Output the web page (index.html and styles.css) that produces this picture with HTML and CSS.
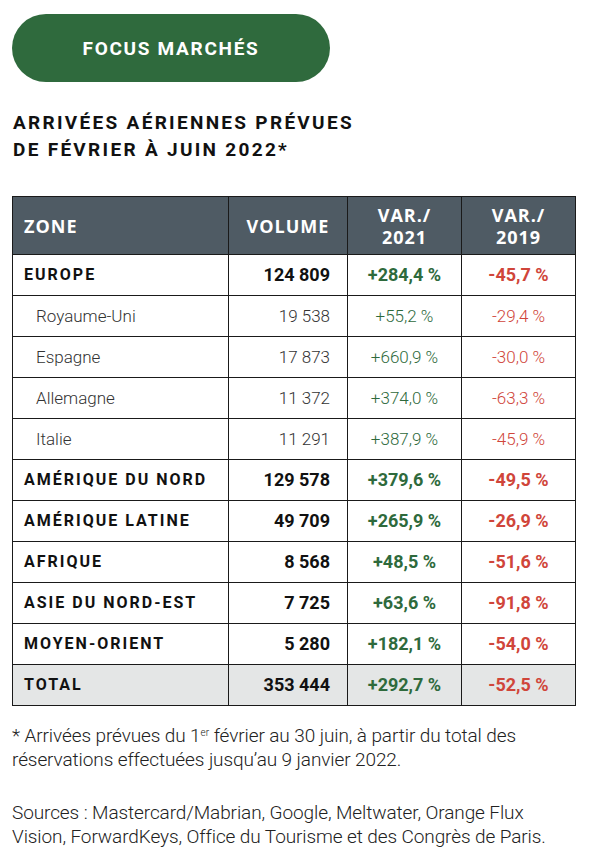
FILE: index.html
```html
<!DOCTYPE html>
<html lang="fr">
<head>
<meta charset="utf-8">
<title>Focus marchés</title>
<link rel="stylesheet" href="styles.css">
</head>
<body>
<div class="page">
  <div class="pill">FOCUS MARCHÉS</div>
  <h1 class="title">ARRIVÉES AÉRIENNES PRÉVUES<br>DE FÉVRIER À JUIN 2022*</h1>
  <table class="data">
    <colgroup>
      <col class="c-zone"><col class="c-vol"><col class="c-var"><col class="c-var">
    </colgroup>
    <thead>
      <tr><th class="zone">ZONE</th><th>VOLUME</th><th>VAR./<br>2021</th><th>VAR./<br>2019</th></tr>
    </thead>
    <tbody>
      <tr class="main"><td class="zone">EUROPE</td><td class="vol">124 809</td><td class="pos">+284,4 %</td><td class="neg">-45,7 %</td></tr>
      <tr class="sub"><td class="zone">Royaume-Uni</td><td class="vol">19 538</td><td class="pos">+55,2 %</td><td class="neg">-29,4 %</td></tr>
      <tr class="sub"><td class="zone">Espagne</td><td class="vol">17 873</td><td class="pos">+660,9 %</td><td class="neg">-30,0 %</td></tr>
      <tr class="sub"><td class="zone">Allemagne</td><td class="vol">11 372</td><td class="pos">+374,0 %</td><td class="neg">-63,3 %</td></tr>
      <tr class="sub"><td class="zone">Italie</td><td class="vol">11 291</td><td class="pos">+387,9 %</td><td class="neg">-45,9 %</td></tr>
      <tr class="main"><td class="zone">AMÉRIQUE DU NORD</td><td class="vol">129 578</td><td class="pos">+379,6 %</td><td class="neg">-49,5 %</td></tr>
      <tr class="main"><td class="zone">AMÉRIQUE LATINE</td><td class="vol">49 709</td><td class="pos">+265,9 %</td><td class="neg">-26,9 %</td></tr>
      <tr class="main"><td class="zone">AFRIQUE</td><td class="vol">8 568</td><td class="pos">+48,5 %</td><td class="neg">-51,6 %</td></tr>
      <tr class="main"><td class="zone">ASIE DU NORD-EST</td><td class="vol">7 725</td><td class="pos">+63,6 %</td><td class="neg">-91,8 %</td></tr>
      <tr class="main"><td class="zone">MOYEN-ORIENT</td><td class="vol">5 280</td><td class="pos">+182,1 %</td><td class="neg">-54,0 %</td></tr>
      <tr class="main total"><td class="zone">TOTAL</td><td class="vol">353 444</td><td class="pos">+292,7 %</td><td class="neg">-52,5 %</td></tr>
    </tbody>
  </table>
  <p class="note">* Arrivées prévues du 1<sup>er</sup> février au 30 juin, à partir du total des réservations effectuées jusqu’au 9 janvier 2022.</p>
  <p class="note">Sources : Mastercard/Mabrian, Google, Meltwater, Orange Flux Vision, ForwardKeys, Office du Tourisme et des Congrès de Paris.</p>
</div>
</body>
</html>
```

FILE: styles.css
```css
html, body {
  margin: 0;
  padding: 0;
  background: #ffffff;
}
.page {
  padding: 14px 0 0 12px;
  width: 580px;
  font-family: Roboto, "Liberation Sans", sans-serif;
  color: #111;
}
.pill {
  width: 318px;
  height: 68px;
  border-radius: 34px;
  background: #2f6a3d;
  color: #fff;
  display: flex;
  align-items: center;
  justify-content: center;
  font-weight: 700;
  font-size: 19px;
  letter-spacing: 1.7px;
}
.title {
  margin: 27px 0 0 1px;
  font-size: 19px;
  line-height: 27px;
  font-weight: 700;
  letter-spacing: 2.3px;
  color: #111;
}
.data {
  margin-top: 33px;
  border-collapse: collapse;
  width: 564px;
  table-layout: fixed;
}
.c-zone { width: 216px; }
.c-vol { width: 119px; }
.c-var { width: 114px; }
.data th, .data td {
  border: 1px solid #1a1a1a;
  padding: 0;
}
.data th {
  background: #4f5b64;
  color: #fff;
  font-family: "Open Sans", Roboto, sans-serif;
  font-weight: 700;
  font-size: 18px;
  line-height: 22px;
  letter-spacing: 1px;
  height: 57px;
  text-align: center;
}
.data th.zone {
  text-align: left;
  padding-left: 11px;
}
.data td {
  height: 40px;
  line-height: 22px;
  text-align: center;
  font-size: 18px;
}
.data td.zone {
  text-align: left;
  padding-left: 11px;
}
.data td.vol {
  text-align: right;
  padding-right: 17px;
}
.main td {
  font-weight: 700;
}
.main td.zone {
  font-size: 16px;
  letter-spacing: 2px;
}
.sub td {
  font-weight: 300;
  font-size: 17px;
  color: #333;
}
.sub td.zone {
  padding-left: 23px;
}
.pos, .sub .pos { color: #2e6a3c; }
.neg, .sub .neg { color: #d0453a; }
.total td {
  background: #e4e6e6;
}
.note {
  margin: 18px 0 0 0;
  width: 545px;
  font-size: 19px;
  font-weight: 300;
  line-height: 24px;
  letter-spacing: -0.1px;
  color: #222;
}
.note + .note {
  margin-top: 29px;
}
.note sup {
  font-size: 10px;
  line-height: 0;
  letter-spacing: 0;
  vertical-align: 6px;
}
```
